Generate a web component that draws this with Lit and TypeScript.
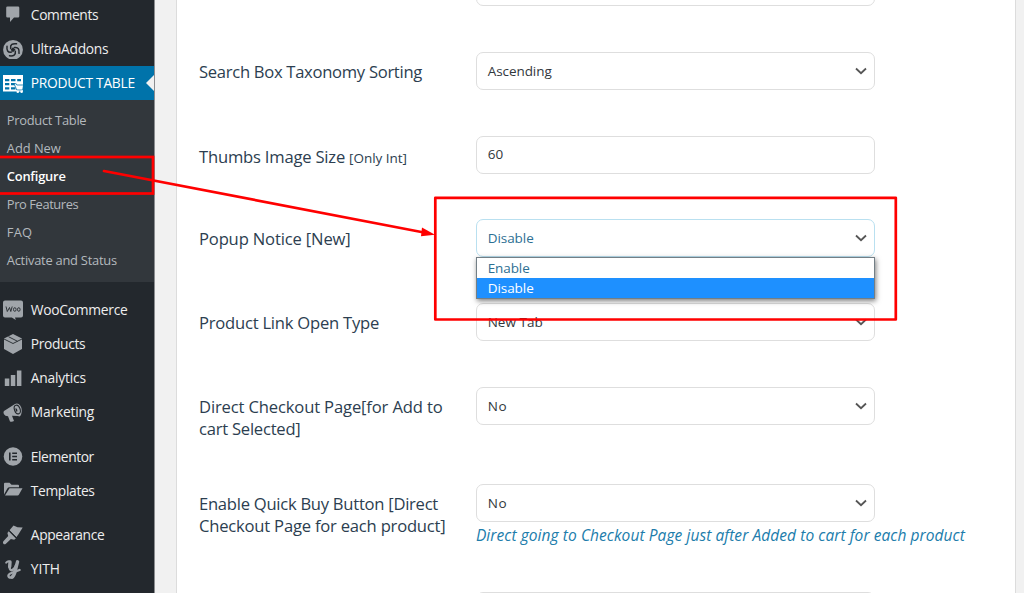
import { LitElement, html, css, svg, nothing } from 'lit';
import { customElement, property } from 'lit/decorators.js';
import { classMap } from 'lit/directives/class-map.js';

/** Single-line text whose tracking is adjusted so that it fills a given advance width. */
@customElement('fit-text')
class FitText extends LitElement {
  @property() text = '';
  @property({ type: Number }) w = 0;
  static styles = css`
    :host { display: inline-block; white-space: pre; }
  `;
  render() {
    return html`<span>${this.text}</span>`;
  }
  updated() {
    const s = this.renderRoot.querySelector('span') as HTMLElement;
    s.style.letterSpacing = '0px';
    const natural = s.getBoundingClientRect().width;
    s.style.letterSpacing = ((this.w - natural) / this.text.length).toFixed(3) + 'px';
  }
}

const dark = '#23282d';
const icons: Record<string, unknown> = {
  comment: svg`<path d="M6.500 3.500h10.500q1.300 0 1.300 1.300v8.500q0 1.300-1.300 1.300h-4L9 19v-4.400H6.500q-1.300 0-1.300-1.300V4.800q0-1.300 1.300-1.300z"/>`,
  swirl: svg`<circle cx="12" cy="12.800" r="9.900"/>
    <g fill="none" stroke="${dark}" stroke-width="1.500" stroke-linecap="round" transform="translate(0 .8)">
      <path d="M9.700 10.500C9 6.800 11.500 5.500 15.500 6"/><path d="M13.500 9.700C17.200 9 18.500 11.500 18 15.500"/>
      <path d="M14.300 13.500C15 17.200 12.500 18.500 8.500 18"/><path d="M10.500 14.300C6.800 15 5.500 12.500 6 8.500"/>
    </g><path d="M12 10.300l2.500 2.500-2.500 2.500-2.500-2.500z" fill="${dark}"/>`,
  table: svg`<path fill="#fff" fill-rule="evenodd" d="M2 4h20v16.500H2zM4 8v2.300h4.300V8zm6 0v2.300h4.500V8zm6.200 0v2.300H20V8zM4 12v2.300h4.300V12zm6 0v2.300h4V12zM4 16.200v2.300h4.300v-2.300zm6 0v2.300h4.500v-2.300z"/>
    <path fill="#fff" stroke="#0073aa" stroke-width=".8" d="M13 12.700h2.200l.6 1.300H22.600l-1 5h-5.800z"/>
    <circle cx="16.800" cy="20.700" r="1.300" fill="#fff"/><circle cx="20.600" cy="20.700" r="1.300" fill="#fff"/>`,
  woo: svg`<path d="M4 2.500h16q2 0 2 2v13q0 2-2 2h-6l.8 2.500-4-2.500H4q-2 0-2-2v-13q0-2 2-2z"/>
    <g fill="none" stroke="${dark}" stroke-width=".9"><path d="M5 8.500l1.300 5L8.500 9.500l1.300 4L11.200 8.500"/>
    <ellipse cx="13.800" cy="11.500" rx="1.300" ry="1.800"/><ellipse cx="17.800" cy="11.500" rx="1.300" ry="1.800"/></g>`,
  box: svg`<path d="M12 2l9 4.500v10.500L12 22l-9-5V6.500z"/>
    <path fill="none" stroke="${dark}" stroke-width=".9" d="M3 7l9 4.500L21 7M7.500 4.700l9 4.600"/>`,
  bars: svg`<path d="M3.800 12.500h4.500v7.500H3.800zM9.800 9h4.500v11H9.800zM15.900 4.500h4.500V20h-4.500z"/>`,
  horn: svg`<path d="M3 11l11-7q3-1.500 5.200 1.500T20.500 13t-3.500 3l-6-.2 2 5.200q-2 1.200-4 .5l-2-5.200q-3 0-4-2t0-3.300z"/>
    <ellipse cx="16.300" cy="9.500" rx="2.800" ry="4.500" transform="rotate(-20 16.300 9.500)" fill="none" stroke="${dark}" stroke-width="1.100"/>
    <path d="M14.300 8.200q2.300 0 2 3.200h-1.300z" fill="${dark}"/>`,
  elementor: svg`<circle cx="12" cy="11.500" r="9.300"/><path fill="${dark}" d="M8 7.500h1.600v8H8zM11.200 7.500H16v1.400h-4.800zM11.200 10.800H16v1.400h-4.800zM11.200 14.100H16v1.400h-4.800z"/>`,
  folder: svg`<path d="M3 15.500V4.800q0-1 1-1h4.500l2 2h6.500q1 0 1 1v1.400H8.500q-1.300 0-2 1z"/><path d="M8.500 9.300H21.500L18 15.500q-.5 1-1.500 1H4z"/>`,
  brush: svg`<path d="M12.500 2.500l4 1.800 5.200.2-4.200 6.700-2.200 3L8.500 7.200z"/><path d="M7.700 8.200l7.200 7.300-1.800 1.300-3.200-.8-5 4.700q-1.500 1-2.500 0t0-2.500L7.200 13l-.8-3z"/>
    <path fill="none" stroke="${dark}" stroke-width=".9" d="M7.900 7.300l8 7.700"/>`,
  yith: svg`<g fill="none" stroke="#a0a5aa" stroke-linecap="round" stroke-linejoin="round">
    <path stroke-width="2" d="M5.200 5.700Q7 3.500 8.500 4.500"/><path stroke-width="3.400" d="M9 5L8.700 9.500"/>
    <path stroke-width="2.400" d="M8.500 10q.3 4 3 3t3.500-5"/><path stroke-width="3.400" d="M16.500 4.800l-2.300 9.200q-1.200 5-3.200 6"/>
    <path stroke-width="2.400" d="M11.500 20.300q-3.500 1-4-1t3-3.300 8-3"/></g>`,
};

type Item = { icon: string; text: string; w: number; current?: boolean };
const top: Item[] = [
  { icon: 'comment', text: 'Comments', w: 67.5 },
  { icon: 'swirl', text: 'UltraAddons', w: 77.5 },
  { icon: 'table', text: 'PRODUCT TABLE', w: 104, current: true },
];
const sub: [string, number][] = [
  ['Product Table', 79.5], ['Add New', 54], ['Configure', 58.8],
  ['Pro Features', 71.5], ['FAQ', 25.5], ['Activate and Status', 110],
];
const groups: Item[][] = [
  [
    { icon: 'woo', text: 'WooCommerce', w: 96.7 },
    { icon: 'box', text: 'Products', w: 54.5 },
    { icon: 'bars', text: 'Analytics', w: 55 },
    { icon: 'horn', text: 'Marketing', w: 63.3 },
  ],
  [
    { icon: 'elementor', text: 'Elementor', w: 63 },
    { icon: 'folder', text: 'Templates', w: 63.8 },
  ],
  [
    { icon: 'brush', text: 'Appearance', w: 73.5 },
    { icon: 'yith', text: 'YITH', w: 29 },
  ],
];

type Row = {
  cls: string; label: [string, number][]; small?: [string, number];
  value: [string, number]; select?: boolean; open?: boolean; help?: [string, number];
};
const rows: Row[] = [
  { cls: 'r0', label: [], value: ['', 0] },
  { cls: 'r1', label: [['Search Box Taxonomy Sorting', 223]], value: ['Ascending', 64], select: true },
  { cls: 'r2', label: [['Thumbs Image Size', 146]], small: ['[Only Int]', 58], value: ['60', 15.5] },
  { cls: 'r3', label: [['Popup Notice [New]', 151.5]], value: ['Disable', 46], select: true, open: true },
  { cls: 'r4', label: [['Product Link Open Type', 180]], value: ['New Tab', 55], select: true },
  { cls: 'r5', label: [['Direct Checkout Page[for Add to', 243.5], ['cart Selected]', 101.5]], value: ['No', 19.5], select: true },
  {
    cls: 'r6', label: [['Enable Quick Buy Button [Direct', 239], ['Checkout Page for each product]', 246.5]],
    value: ['No', 19.5], select: true,
    help: ['Direct going to Checkout Page just after Added to cart for each product', 489],
  },
  { cls: 'r7', label: [], value: ['', 0] },
];

@customElement('app-root')
class AppRoot extends LitElement {
  static styles = css`
    :host { display: block; position: relative; width: 1024px; height: 593px; overflow: hidden;
      background: #f1f1f1; font-family: 'Open Sans', 'Noto Sans', sans-serif; }
    .page { display: flex; height: 593px; }
    .side { flex: none; box-sizing: border-box; width: 155px; height: 593px; overflow: hidden;
      background: #23282d; border-right: 1px solid #8b8d90; font-size: 13.800px; color: #eee; }
    .inner { margin-top: -2px; }
    .item { display: flex; align-items: center; height: 34px; padding-left: 3px; gap: 7.800px; }
    .item svg { flex: none; width: 20px; height: 20px; fill: #a0a5aa; }
    .item fit-text { line-height: 33px; height: 34px; }
    .current { background: #0073aa; color: #fff; }
    .tip { margin-left: auto; width: 0; height: 0; border: 8px solid transparent; border-right-color: #f1f1f1; border-left: 0; }
    .sub { background: #32373c; padding: 6.500px 0 7.500px 6.800px; font-size: 12.900px; color: #b4b9be; }
    .sub div { height: 28px; line-height: 27px; }
    .sub .on { color: #fff; font-weight: 600; }
    .group { padding-top: 11px; }
    .group + .group { padding-top: 10.500px; }
    .main { flex: 1; padding: 0 8px 0 21px; }
    .card { height: 593px; overflow: hidden; box-sizing: border-box; background: #fff;
      border: solid #dcdcdc; border-width: 0 1px; padding-left: 22px; }
    .rows { margin-top: -32px; }
    .row { display: grid; grid-template-columns: 277.400px 1fr; align-items: start; height: 84px; }
    .r1 { height: 83.500px; } .r2 { height: 83.500px; }
    .r5 { height: 97.400px; } .r6 { height: 107.600px; }
    .label { padding-top: 9px; font-size: 16.600px; line-height: 22px; color: #2c3e50; }
    .r2 .label { padding-top: 10.400px; }
    .label div { height: 22px; }
    .label small { font-size: 13.500px; margin-left: 4px; }
    .field { box-sizing: border-box; width: 399px; height: 38px; border: 1px solid #dedede; border-radius: 7px;
      display: flex; align-items: center; justify-content: space-between; padding: 0 7px 0 10.300px;
      font-size: 13.500px; color: #32373c; background: #fff; }
    .r2 .field { padding-bottom: 1px; }
    .field svg { width: 12px; height: 8px; fill: none; stroke: #555; stroke-width: 1.800; }
    .open { border-color: #b9e0f0; color: #2d6f93; }
    .control { position: relative; }
    .menu { position: absolute; z-index: 2; left: 0; top: 38px; width: 399px; height: 42px; box-sizing: border-box;
      border: 1px solid #737f86; background: #fff; box-shadow: 1px 2px 5px rgba(0,0,0,.5);
      font-size: 13.500px; color: #2d6f93; }
    .opt { height: 20px; line-height: 20px; padding-left: 10.300px; }
    .sel { background: #1e90ff; color: #fff; }
    .help { font-size: 15.500px; line-height: 22px; font-style: italic; color: #207cab; padding-top: 1.500px; margin-left: -.5px; }
    .marks { position: absolute; left: 0; top: 0; z-index: 5; pointer-events: none; }
  `;

  item(i: Item) {
    return html`<div class=${classMap({ item: true, current: !!i.current })}>
      <svg viewBox="2 2 20 20">${icons[i.icon]}</svg>
      <fit-text .text=${i.text} .w=${i.w}></fit-text>
      ${i.current ? html`<span class="tip"></span>` : nothing}
    </div>`;
  }

  row(r: Row) {
    return html`<div class="row ${r.cls}">
      <div class="label">${r.label.map(([t, w], n) => html`<div><fit-text .text=${t} .w=${w}></fit-text>${
        r.small && n === 0 ? html`<small><fit-text .text=${r.small[0]} .w=${r.small[1]}></fit-text></small>` : nothing}</div>`)}</div>
      <div class="control">
        <div class=${classMap({ field: true, open: !!r.open })}>
          ${r.value[0] ? html`<fit-text .text=${r.value[0]} .w=${r.value[1]}></fit-text>` : nothing}
          ${r.select ? html`<svg viewBox="0 0 12 8"><path d="M1 1.500l5 4.700 5-4.700"/></svg>` : nothing}
        </div>
        ${r.open ? html`<div class="menu">
          <div class="opt"><fit-text .text=${'Enable'} .w=${42}></fit-text></div>
          <div class="opt sel"><fit-text .text=${'Disable'} .w=${46}></fit-text></div>
        </div>` : nothing}
        ${r.help ? html`<div class="help"><fit-text .text=${r.help[0]} .w=${r.help[1]}></fit-text></div>` : nothing}
      </div>
    </div>`;
  }

  render() {
    return html`<div class="page">
        <nav class="side"><div class="inner">
          ${top.map((i) => this.item(i))}
          <div class="sub">${sub.map(([t, w]) => html`<div class=${classMap({ on: t === 'Configure' })}><fit-text .text=${t} .w=${w}></fit-text></div>`)}</div>
          ${groups.map((g) => html`<div class="group">${g.map((i) => this.item(i))}</div>`)}
        </div></nav>
        <main class="main"><div class="card"><div class="rows">${rows.map((r) => this.row(r))}</div></div></main>
      </div>
      <svg class="marks" width="1024" height="593" fill="none" stroke="#f00" stroke-width="2.700">
        <rect x="-4" y="157" width="157" height="36.500"/>
        <rect x="435.300" y="197.800" width="460.500" height="121.700" stroke-linejoin="round"/>
        <path d="M104 171l320 61.500" stroke-linecap="round"/>
        <path d="M422 227.500l13 7.200-14 1.500z" fill="#f00" stroke="none"/>
      </svg>`;
  }
}
